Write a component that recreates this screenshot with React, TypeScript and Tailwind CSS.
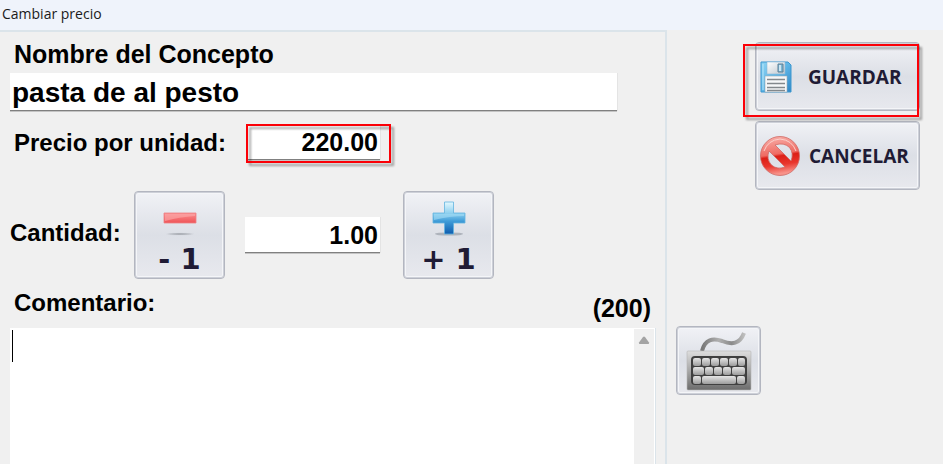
import { useState } from "react";
import type { ReactNode } from "react";

const LABEL = "text-2xl leading-8 font-bold whitespace-nowrap text-black";
const FIELD =
  "min-w-0 rounded-none border-b border-[#808080] bg-white font-bold text-black shadow-[1px_0_0_#e4e4e4,0_1px_0_#c4c4c4] outline-none";
const BUTTON =
  "rounded-[4px] border border-[#b3b6c0] bg-linear-to-b from-[#f1f2f6] via-[#dcdfe6] to-[#e8e9ee] text-[#1f1b35] shadow-[inset_0_0_0_1px_#cdd0d8,inset_0_0_0_2px_#f4f5f8]";

function Highlight({ className }: { className: string }) {
  return (
    <div
      className={`pointer-events-none absolute border-2 border-[#fb0007] drop-shadow-[3px_3px_1px_rgba(0,0,0,0.35)] ${className}`}
    />
  );
}

function SaveIcon() {
  return (
    <svg viewBox="0 0 32 32" className="size-8 shrink-0" aria-hidden="true">
      <defs>
        <linearGradient id="disk" x1="0" y1="0" x2="1" y2="1">
          <stop offset="0" stopColor="#8fd4f3" />
          <stop offset="0.5" stopColor="#5db5e6" />
          <stop offset="1" stopColor="#2f86c6" />
        </linearGradient>
        <linearGradient id="shutter" x1="0" y1="0" x2="1" y2="1">
          <stop offset="0" stopColor="#ffffff" />
          <stop offset="1" stopColor="#bcc6ce" />
        </linearGradient>
      </defs>
      <path d="M1 1h27l3 3v27H1z" fill="url(#disk)" stroke="#3d97cf" />
      <path d="M3 3v26" stroke="#b9e6fa" />
      <path d="M7 1h18v12H7z" fill="url(#shutter)" stroke="#8dbbd6" strokeWidth="0.6" />
      <path d="M18 3h5v8h-5z" fill="#7fb7d4" stroke="#5b7f95" />
      <path d="M19 4h2v6h-2z" fill="#cbe6f3" />
      <path d="M5 15h22v16H5z" fill="#f6f7f8" stroke="#9aabb6" strokeWidth="0.6" />
      <path d="M7 18.5h18M7 22.5h18M7 26.5h18M7 29.5h18" stroke="#83888c" strokeWidth="1.4" />
    </svg>
  );
}

function CancelIcon() {
  return (
    <svg viewBox="0 0 40 40" className="size-10 shrink-0" aria-hidden="true">
      <defs>
        <linearGradient id="ban" x1="0" y1="0" x2="0.15" y2="1">
          <stop offset="0" stopColor="#f9b5af" />
          <stop offset="0.5" stopColor="#ef6a62" />
          <stop offset="0.56" stopColor="#dc1f17" />
          <stop offset="0.78" stopColor="#e9362d" />
          <stop offset="1" stopColor="#f8928a" />
        </linearGradient>
      </defs>
      <path
        fillRule="evenodd"
        d="M20 0.500a19.500 19.500 0 1 0 0 39a19.500 19.500 0 1 0 0-39zM15 9Q24 6 29.500 11.500Q34 17 31 25zM9 15L25 31Q17 34 11.500 29Q6 23 9 15z"
        fill="url(#ban)"
        stroke="#cf6a65"
        strokeWidth="0.8"
      />
      <path d="M4 15Q8 4 20 3Q32 4 36 15" fill="none" stroke="#fbd0cc" strokeWidth="1" />
    </svg>
  );
}

function MinusIcon() {
  return (
    <svg viewBox="0 0 34 36" className="h-9 w-[34px]" aria-hidden="true">
      <defs>
        <linearGradient id="minus" x1="0" y1="0" x2="0" y2="1">
          <stop offset="0" stopColor="#fb8f90" />
          <stop offset="1" stopColor="#ef5357" />
        </linearGradient>
        <radialGradient id="minusShade">
          <stop offset="0" stopColor="#8d9198" stopOpacity="0.9" />
          <stop offset="1" stopColor="#8d9198" stopOpacity="0.1" />
        </radialGradient>
      </defs>
      <path d="M1 12h32v10H1z" fill="url(#minus)" stroke="#ee8286" strokeWidth="0.8" />
      <path d="M2 13h30v2Q16 16 2 20z" fill="#fcabab" opacity="0.6" />
      <ellipse cx="17" cy="33" rx="14" ry="1.300" fill="url(#minusShade)" />
    </svg>
  );
}

function PlusIcon() {
  return (
    <svg viewBox="0 0 34 36" className="h-9 w-[34px]" aria-hidden="true">
      <defs>
        <linearGradient id="plus" x1="0" y1="0" x2="0" y2="1">
          <stop offset="0" stopColor="#e4f8fe" />
          <stop offset="0.35" stopColor="#8ed0ef" />
          <stop offset="0.6" stopColor="#3f9cd8" />
          <stop offset="1" stopColor="#0f5cae" />
        </linearGradient>
      </defs>
      <ellipse cx="17" cy="33" rx="14" ry="1.600" fill="#9a9fa8" opacity="0.7" />
      <path d="M12.500 1h9v11H33v10H21.500v11h-9V22H1V12h11.500z" fill="url(#plus)" stroke="#62b4e0" strokeWidth="0.8" />
      <path d="M2 13h30v2Q18 15 2 19z" fill="#a3dcf5" opacity="0.6" />
    </svg>
  );
}

// [x, width] of every key
const KEY_ROWS = [
  [[0, 8], [9, 8], [18, 8], [27, 8], [36, 8], [45, 7]],
  [[0, 11], [12, 8], [21, 8], [30, 8], [39, 13]],
  [[0, 8], [9, 34], [44, 8]],
];

function KeyboardIcon() {
  return (
    <svg viewBox="0 0 66 60" className="h-[60px] w-[66px]" aria-hidden="true">
      <defs>
        <linearGradient id="kbBody" x1="0" y1="0" x2="0" y2="1">
          <stop offset="0" stopColor="#dedede" />
          <stop offset="0.5" stopColor="#a8a8a8" />
          <stop offset="1" stopColor="#6c6c6c" />
        </linearGradient>
        <linearGradient id="kbKey" x1="0" y1="0" x2="0" y2="1">
          <stop offset="0" stopColor="#e6e6e6" />
          <stop offset="1" stopColor="#9c9c9c" />
        </linearGradient>
        <linearGradient id="kbCord" x1="0" y1="0" x2="1" y2="0">
          <stop offset="0" stopColor="#777777" />
          <stop offset="0.4" stopColor="#b0b0b0" />
          <stop offset="0.7" stopColor="#8a8a8a" />
          <stop offset="1" stopColor="#bdbdbd" />
        </linearGradient>
      </defs>
      <path d="M16 20C19 8 27 7 36 10C46 14 54 13 58 2" fill="none" stroke="url(#kbCord)" strokeWidth="4" />
      <rect x="1" y="20" width="64" height="39" rx="1" fill="url(#kbBody)" stroke="#b5b5b5" strokeWidth="0.6" />
      <rect x="5" y="25" width="56" height="29" rx="4" fill="#404040" />
      {KEY_ROWS.map((row, r) =>
        row.map(([x, w]) => (
          <rect key={`${r}-${x}`} x={7 + x} y={27 + r * 9} width={w} height="8" rx="2" fill="url(#kbKey)" />
        ))
      )}
    </svg>
  );
}

function StepButton({ label, icon, onClick }: { label: string; icon: ReactNode; onClick: () => void }) {
  return (
    <button
      type="button"
      onClick={onClick}
      className={`${BUTTON} flex h-[88px] w-[91px] shrink-0 flex-col items-center gap-1 pt-[9px] font-['DejaVu_Sans',sans-serif] text-[29px] leading-9 font-bold`}
    >
      {icon}
      <span>{label}</span>
    </button>
  );
}

export default function App() {
  const [name, setName] = useState("pasta de al pesto");
  const [price, setPrice] = useState("220.00");
  const [quantity, setQuantity] = useState("1.00");
  const [comment, setComment] = useState("");

  const step = (delta: number) =>
    setQuantity((q) => Math.max(0, (parseFloat(q) || 0) + delta).toFixed(2));

  return (
    <div className="flex min-h-screen flex-col bg-[#f0f0f0] font-['Liberation_Sans',Arial,sans-serif]">
      <header className="h-[30px] bg-[#eff3fb] px-0.5 pt-1">
        <h1 className="font-['Open_Sans','Noto_Sans',sans-serif] text-sm leading-5 text-[#1a1a1a]">Cambiar precio</h1>
      </header>

      <form className="flex flex-1" onSubmit={(e) => e.preventDefault()}>
        <div className="flex min-w-0 flex-1 flex-col border-t-2 border-r-2 border-[#dbe4ea] pr-2.5 pl-2.5">
          <label
            htmlFor="name"
            className="mt-1.5 pl-1 text-[25px] leading-8 font-bold whitespace-nowrap text-black"
          >
            Nombre del Concepto
          </label>
          <input
            id="name"
            value={name}
            onChange={(e) => setName(e.target.value)}
            className={`${FIELD} mt-[3px] mr-[38px] h-[38px] px-0.5 pt-0.5 text-[28px]`}
          />

          <div className="mt-[15px] flex h-[34px] items-center">
            <label htmlFor="price" className={`${LABEL} w-[236px] pl-1`}>
              Precio por unidad:
            </label>
            <div className="relative w-[134px]">
              <input
                id="price"
                value={price}
                onChange={(e) => setPrice(e.target.value)}
                className={`${FIELD} block h-[34px] w-full px-0.5 text-right text-[25px]`}
              />
              <Highlight className="-top-0.5 -right-[11px] -bottom-[3px] left-0" />
            </div>
          </div>

          <div className="mt-[31px] flex items-center">
            <label htmlFor="quantity" className={`${LABEL} w-[124px] pb-1`}>
              Cantidad:
            </label>
            <StepButton label="- 1" icon={<MinusIcon />} onClick={() => step(-1)} />
            <input
              id="quantity"
              value={quantity}
              onChange={(e) => setQuantity(e.target.value)}
              className={`${FIELD} mr-[23px] ml-5 h-9 w-[135px] px-0.5 pt-0.5 text-right text-[25px]`}
            />
            <StepButton label="+ 1" icon={<PlusIcon />} onClick={() => step(1)} />
          </div>

          <div className="mt-2 flex items-start justify-between pr-1 pl-1">
            <label htmlFor="comment" className={LABEL}>
              Comentario:
            </label>
            <span className="pt-[5px] text-[25px] leading-8 font-bold text-black">(200)</span>
          </div>
          <div className="relative mt-1 -mr-px flex flex-1 border-r border-[#dbe4ea]">
            <textarea
              id="comment"
              maxLength={200}
              value={comment}
              onChange={(e) => setComment(e.target.value)}
              className="peer min-h-[120px] flex-1 resize-none bg-white px-0.5 text-[25px] font-bold outline-none"
            />
            <span className="pointer-events-none absolute top-0.5 left-0.5 h-8 w-px bg-black peer-focus:hidden" />
            <div className="flex w-[21px] justify-center border-t border-r border-white bg-[#f0f0f0] pt-[7px]">
              <svg viewBox="0 0 12 8" className="h-2 w-3" aria-hidden="true">
                <path d="M5 1Q6 0 7 1L11 6.500Q11.500 8 10 8H2Q0.500 8 1 6.500z" fill="#a3a3a3" />
              </svg>
            </div>
          </div>
        </div>

        <aside className="flex w-[276px] shrink-0 flex-col pr-[23px] pl-[9px]">
          <div className="mt-3 flex flex-col gap-2.5 self-end font-['Open_Sans','Noto_Sans',sans-serif] text-[19px] font-bold">
            <div className="relative">
              <button type="submit" className={`${BUTTON} flex h-[69px] w-[165px] items-center gap-4 pl-1`}>
                <SaveIcon />
                <span className="pt-0.5">GUARDAR</span>
              </button>
              <Highlight className="top-0.5 right-px -bottom-1.5 -left-3" />
            </div>
            <button type="button" className={`${BUTTON} flex h-[69px] w-[165px] items-center gap-[9px] pl-1`}>
              <CancelIcon />
              <span className="pt-0.5">CANCELAR</span>
            </button>
          </div>
          <button
            type="button"
            aria-label="Teclado"
            className={`${BUTTON} mt-[136px] flex h-[69px] w-[85px] items-center justify-center`}
          >
            <KeyboardIcon />
          </button>
        </aside>
      </form>
    </div>
  );
}
